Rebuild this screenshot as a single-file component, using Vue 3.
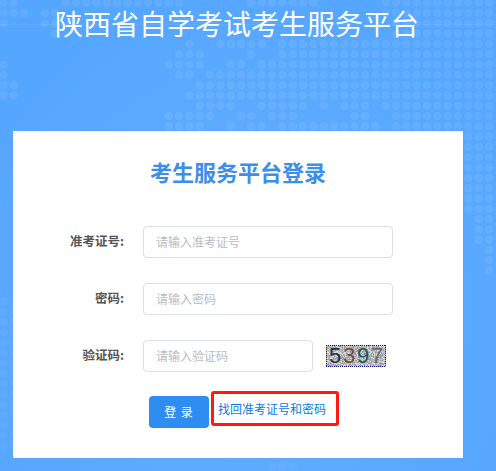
<script setup>
const rowSpans = {
  0: [[0,1],[6,17],[24,30],[37,47]],
  1: [[0,2],[4,5],[37,47]],
  2: [[0,0],[4,5],[38,47]],
  3: [[5,5],[38,47]],
  4: [[18,18],[21,25],[27,47]],
  5: [[17,19],[24,24],[27,47]],
  6: [[0,0],[16,19],[22,23],[25,47]],
  7: [[0,0],[17,18],[20,47]],
  8: [[0,1],[19,47]],
  9: [[0,1],[18,47]],
  10: [[19,22],[25,29],[31,31],[33,35],[37,47]],
  11: [[16,20],[23,24],[26,28],[34,35],[38,47]],
  12: [[16,19],[22,22],[24,25],[27,36],[38,47]],
  13: [[45,47]], 14: [[45,47]], 15: [[45,47]], 16: [[45,47]], 17: [[45,47]], 18: [[45,47]], 19: [[45,47]], 20: [[45,47]],
  21: [[46,47]], 22: [[46,47]], 23: [[46,47]],
  24: [[47,47]], 25: [[47,47]], 26: [[47,47]],
  45: [[26,28]]
}
for (let j = 29; j <= 43; j++) rowSpans[j] = [[0, 1]]

const dots = []
for (const [j, spans] of Object.entries(rowSpans)) {
  for (const [a, b] of spans) {
    for (let i = a; i <= b; i++) {
      dots.push({ key: `${i}-${j}`, x: 3.5 + 10.33 * i, y: 2.7 + 10.3 * Number(j), o: Number(j) > 26 ? 0.04 : 0.07 })
    }
  }
}

// Seeded speckle for the captcha picture
let seed = 5397
const rnd = () => {
  seed = (seed * 16807) % 2147483647
  return seed / 2147483647
}
const palette = ['#9a9aa8', '#c9c9bd', '#dcdfd6', '#a8b0a8', '#b5a9bd', '#d4dcdc', '#8f98aa', '#c2b8b0']
const speckles = []
for (let y = 0; y < 22; y++) {
  for (let x = 0; x < 60; x++) {
    speckles.push({ key: `${x}-${y}`, x, y, c: palette[Math.floor(rnd() * palette.length)] })
  }
}
const borderDots = []
for (let x = 0; x < 60; x += 2) {
  borderDots.push({ key: `t${x}`, x, y: 0 }, { key: `b${x}`, x, y: 21 })
}
for (let y = 0; y < 22; y += 2) {
  borderDots.push({ key: `l${y}`, x: 0, y }, { key: `r${y}`, x: 59, y })
}
const digits = [
  { ch: '5', color: '#1f2f4f' },
  { ch: '3', color: '#6b4a4a' },
  { ch: '9', color: '#1f5560' },
  { ch: '7', color: '#5f6a70' }
]
</script>

<template>
  <div class="page">
    <svg class="map" width="496" height="471" viewBox="0 0 496 471" aria-hidden="true">
      <rect x="0" y="24" width="496" height="1" fill="#ffffff" opacity="0.06" />
      <circle v-for="d in dots" :key="d.key" :cx="d.x" :cy="d.y" r="4.3" fill="#ffffff" :opacity="d.o" />
    </svg>

    <h1 class="title">陕西省自学考试考生服务平台</h1>

    <main class="card">
      <h2 class="card-title">考生服务平台登录</h2>

      <form class="form" @submit.prevent>
        <div class="row">
          <label class="label">准考证号:</label>
          <input class="input" type="text" placeholder="请输入准考证号" />
        </div>
        <div class="row">
          <label class="label">密码:</label>
          <input class="input" type="password" placeholder="请输入密码" />
        </div>
        <div class="row">
          <label class="label">验证码:</label>
          <input class="input short" type="text" placeholder="请输入验证码" />
          <div class="captcha">
            <svg class="captcha-noise" width="60" height="22" viewBox="0 0 60 22" shape-rendering="crispEdges" aria-hidden="true">
              <rect v-for="s in speckles" :key="s.key" :x="s.x" :y="s.y" width="1" height="1" :fill="s.c" />
              <rect v-for="b in borderDots" :key="b.key" :x="b.x" :y="b.y" width="1" height="1" fill="#1a1a9a" />
            </svg>
            <span v-for="d in digits" :key="d.ch" class="digit" :style="{ color: d.color }">{{ d.ch }}</span>
          </div>
        </div>
        <div class="actions">
          <button class="submit" type="submit">登 录</button>
          <div class="highlight">
            <a class="link" href="#">找回准考证号和密码</a>
          </div>
        </div>
      </form>
    </main>
  </div>
</template>

<style scoped>
.page {
  position: relative;
  width: 496px;
  height: 471px;
  overflow: hidden;
  box-sizing: border-box;
  padding-top: 4px;
  background: radial-gradient(ellipse 300px 330px at 250px 310px, #65b0ff 0%, #5aa9ff 70%, #55a6ff 100%);
  font-family: "Noto Sans CJK SC", "Liberation Sans", sans-serif;
}
.map {
  position: absolute;
  left: 0;
  top: 0;
}
.title {
  position: relative;
  margin: 0;
  width: 474px;
  height: 38px;
  line-height: 38px;
  text-align: center;
  font-size: 28px;
  font-weight: 400;
  color: #ffffff;
}
.card {
  position: relative;
  box-sizing: border-box;
  width: 450px;
  height: 327px;
  margin: 89px 0 0 13px;
  padding-top: 25px;
  background: #ffffff;
}
.card-title {
  margin: 0;
  height: 30px;
  line-height: 30px;
  text-align: center;
  font-size: 22px;
  font-weight: 700;
  color: #3b8eea;
}
.form {
  display: flex;
  flex-direction: column;
  margin-top: 40px;
}
.row {
  display: flex;
  align-items: center;
  height: 32px;
  margin-bottom: 25px;
}
.label {
  width: 111px;
  margin-right: 19px;
  padding-bottom: 3px;
  text-align: right;
  font-size: 12.5px;
  font-weight: 700;
  color: #555555;
}
.input {
  box-sizing: border-box;
  width: 250px;
  height: 32px;
  padding: 0 12px 2px;
  border: 1px solid #dcdfe6;
  border-radius: 4px;
  outline: none;
  background: #ffffff;
  font-family: inherit;
  font-size: 12px;
  color: #606266;
}
.input::placeholder {
  color: #b8bcc4;
  opacity: 1;
}
.short {
  width: 170px;
}
.captcha {
  position: relative;
  display: flex;
  justify-content: center;
  align-items: center;
  width: 60px;
  height: 22px;
  margin-left: 13px;
}
.captcha-noise {
  position: absolute;
  left: 0;
  top: 0;
}
.digit {
  position: relative;
  width: 14px;
  text-align: center;
  font-family: "Liberation Sans", sans-serif;
  font-size: 22px;
  line-height: 22px;
}
.actions {
  display: flex;
  align-items: flex-start;
  margin: -6px 0 0 136px;
}
.submit {
  width: 60px;
  height: 32px;
  margin-top: 5px;
  padding: 0 0 2px;
  border: none;
  border-radius: 4px;
  background: #2e8df0;
  font-family: inherit;
  font-size: 12px;
  letter-spacing: 1px;
  color: #ffffff;
}
.highlight {
  box-sizing: border-box;
  display: flex;
  align-items: center;
  width: 128px;
  height: 35px;
  margin-left: 2px;
  padding-left: 4px;
  border: 3px solid #ff1a0f;
  border-radius: 3px;
}
.link {
  font-size: 12px;
  color: #0a7de0;
  text-decoration: none;
  white-space: nowrap;
}
</style>
